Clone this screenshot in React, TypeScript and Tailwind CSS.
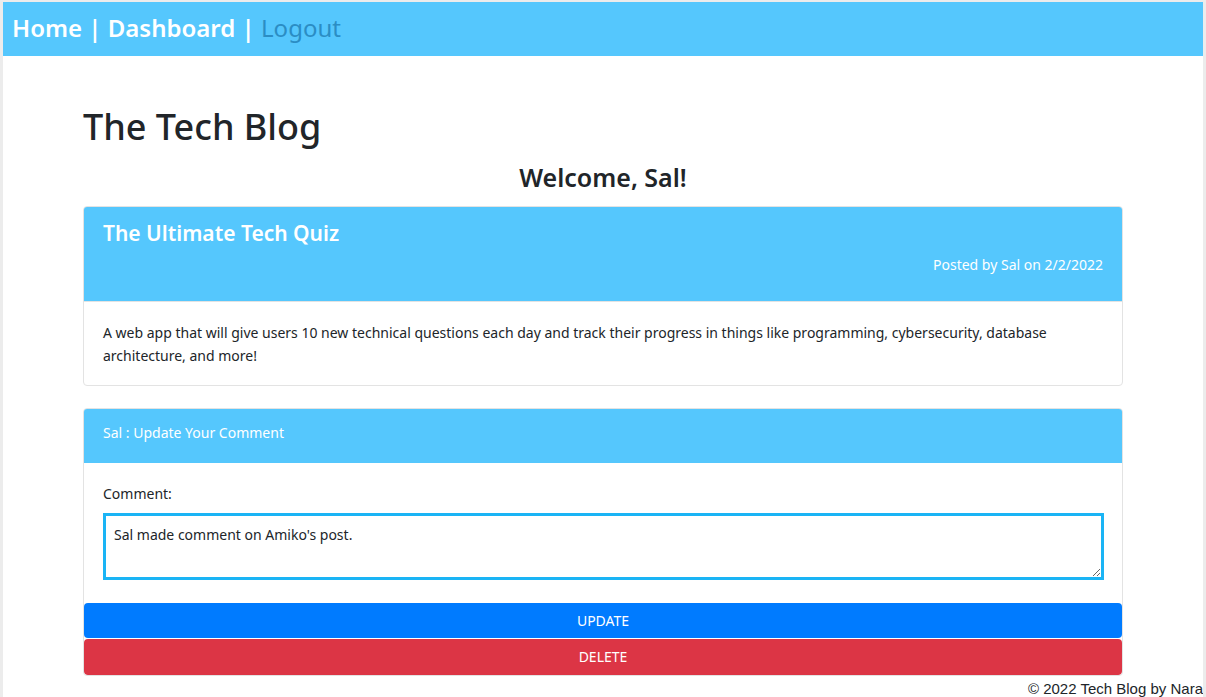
import React from "react";

export default function App() {
  return (
    <div
      className="h-[697px] w-[1206px] overflow-hidden border-x-[3px] border-t-2 border-[#ececec] bg-white text-[#212529]"
      style={{ fontFamily: '"Noto Sans", "Open Sans", sans-serif' }}
    >
      <nav className="flex h-[54px] items-start bg-[#55c7fd] px-[9px] pt-[10px] text-[24px] leading-[32px] whitespace-pre">
        <span className="font-semibold text-white">Home | Dashboard | </span>
        <span className="text-[#2b8dc4]">Logout</span>
      </nav>
      <main className="mx-[80px] pt-[46px]">
        <h1 className="text-[36px] font-medium leading-[50px]">The Tech Blog</h1>
        <h2 className="mt-[8px] text-center text-[25px] font-semibold leading-[34px]">Welcome, Sal!</h2>
        <div className="mt-[12px] overflow-hidden rounded-[4px] border border-[#e3e3e3]">
          <div className="flex h-[94px] flex-col bg-[#55c7fd] px-[19px] pt-[11px] text-white">
            <div className="text-[21px] font-semibold leading-[30px]">The Ultimate Tech Quiz</div>
            <div className="mt-[7px] text-right text-[14px] leading-[20px]">Posted by Sal on 2/2/2022</div>
          </div>
          <div className="border-t border-[#e3e3e3] px-[19px] pb-[18px] pt-[19px] text-[14px] leading-[23px]">
            A web app that will give users 10 new technical questions each day and track their progress in things like programming, cybersecurity, database architecture, and more!
          </div>
        </div>
        <div className="mt-[22px] overflow-hidden rounded-[4px] border border-[#e3e3e3]">
          <div className="flex h-[54px] items-start bg-[#55c7fd] px-[19px] pt-[14px] text-[14px] leading-[20px] text-white">
            Sal : Update Your Comment
          </div>
          <div className="pb-[23px] pl-[19px] pr-[18px] pt-[21px]">
            <label className="block text-[14px] leading-[20px]">Comment:</label>
            <textarea
              className="mt-[9px] block h-[67px] w-full resize-y border-[3px] border-[#1ab4f5] px-[8px] py-[9px] text-[14px] leading-[20px] outline-none"
              defaultValue="Sal made comment on Amiko's post."
            />
          </div>
          <button className="block h-[35px] w-full rounded-[4px] bg-[#007bff] text-[14px] leading-[20px] text-white">UPDATE</button>
          <button className="mt-px block h-[36px] w-full rounded-[4px] bg-[#dc3545] text-[14px] leading-[20px] text-white">DELETE</button>
        </div>
      </main>
      <footer
        className="mt-[4px] flex justify-end whitespace-nowrap text-[15px] leading-[18px] text-[#212529]"
        style={{ fontFamily: '"Liberation Sans", Arial, sans-serif' }}
      >
        © 2022 Tech Blog by Nara
      </footer>
    </div>
  );
}
